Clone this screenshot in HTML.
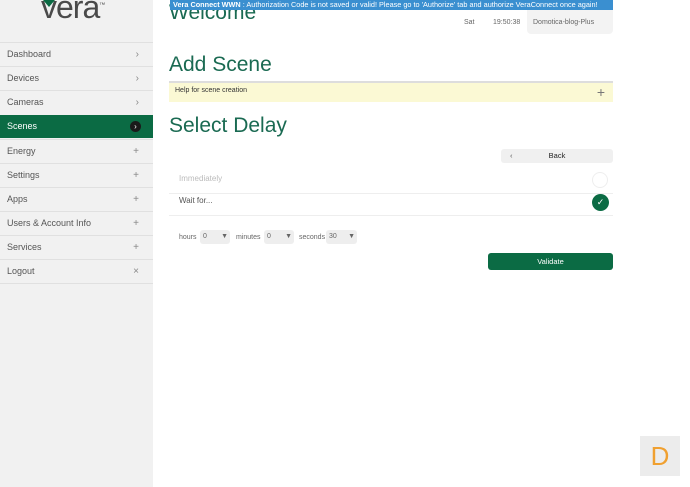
<!DOCTYPE html><html><head><style>
body{margin:0;width:690px;height:487px;position:relative;overflow:hidden;background:#fff;font-family:"Liberation Sans",sans-serif;}
.sb{position:absolute;left:0;top:0;width:153px;height:487px;background:#f1f1f1;}
.logo{position:absolute;left:41px;top:-11px;font-size:32px;color:#4a4a4a;letter-spacing:-1px}
.tri{position:absolute;left:43px;top:0;width:0;height:0;border-left:6px solid transparent;border-right:6px solid transparent;border-top:7px solid #0b6b44}
.it{position:absolute;left:0;width:153px;height:23px;border-top:1px solid #e0e0e0;font-size:9px;color:#555;line-height:23px;box-sizing:border-box;padding-left:7px}
.it span{position:absolute;right:14px;top:0;color:#888;font-size:10px}
.sel{background:#0b6b44;color:#fff;border:none}
.sel span{right:12px;top:6px;width:11px;height:11px;border-radius:50%;background:#1a1a1a;color:#fff;font-size:8px;line-height:11px;text-align:center}
h1{position:absolute;margin:0;font-weight:normal;color:#1a6a52;font-size:21px;left:169px}
.ban{position:absolute;left:170px;top:0;width:443px;height:10px;background:#3a8fd0;color:#fff;font-size:7.3px;line-height:10px;white-space:nowrap;overflow:hidden;padding-left:3px;box-sizing:border-box}
.small{position:absolute;font-size:7px;color:#666}
</style></head><body>
<div class="sb">
<div class="logo">vera<sup style="font-size:6px">™</sup></div>
<div class="tri"></div>
<div class="it" style="top:42px">Dashboard<span>›</span></div>
<div class="it" style="top:66px">Devices<span>›</span></div>
<div class="it" style="top:90px">Cameras<span>›</span></div>
<div class="it sel" style="top:115px">Scenes<span>›</span></div>
<div class="it" style="top:139px">Energy<span>+</span></div>
<div class="it" style="top:163px">Settings<span>+</span></div>
<div class="it" style="top:187px">Apps<span>+</span></div>
<div class="it" style="top:211px">Users &amp; Account Info<span>+</span></div>
<div class="it" style="top:235px">Services<span>+</span></div>
<div class="it" style="top:259px">Logout<span>×</span></div>
<div class="it" style="top:283px;height:1px"></div>
</div>
<h1 style="top:1px">Welcome</h1>
<div class="ban"><b>Vera Connect WWN</b> : Authorization Code is not saved or valid! Please go to 'Authorize' tab and authorize VeraConnect once again!</div>
<div style="position:absolute;left:527px;top:10px;width:86px;height:24px;background:#f3f3f3;border-radius:0 0 4px 4px"></div>
<div class="small" style="left:464px;top:19px">Sat</div>
<div class="small" style="left:493px;top:19px">19:50:38</div>
<div class="small" style="left:533px;top:19px">Domotica-blog-Plus</div>
<h1 style="top:53px">Add Scene</h1>
<div style="position:absolute;left:169px;top:81px;width:444px;height:21px;background:#fbf9d4;border-top:2px solid #ddd;box-sizing:border-box;font-size:7px;color:#333;padding:4px 6px">Help for scene creation<span style="position:absolute;right:8px;top:1px;font-size:14px;color:#777">+</span></div>
<h1 style="top:114px">Select Delay</h1>
<div style="position:absolute;left:501px;top:149px;width:112px;height:14px;background:#f0f0f0;border-radius:3px;font-size:7.5px;color:#222;line-height:14px;text-align:center">Back<span style="position:absolute;left:9px;color:#555">‹</span></div>
<div class="small" style="left:179px;top:174px;font-size:8px;color:#bbb">Immediately</div>
<div style="position:absolute;left:592px;top:172px;width:14px;height:14px;border:1px solid #eee;border-radius:50%"></div>
<div style="position:absolute;left:169px;top:193px;width:444px;height:1px;background:#eee"></div>
<div class="small" style="left:179px;top:196px;font-size:8px;color:#555">Wait for...</div>
<div style="position:absolute;left:592px;top:194px;width:17px;height:17px;background:#0b6b44;border-radius:50%;color:#fff;font-size:9px;line-height:17px;text-align:center">✓</div>
<div style="position:absolute;left:169px;top:215px;width:444px;height:1px;background:#eee"></div>
<div class="small" style="left:179px;top:234px">hours</div>
<div class="small" style="left:200px;top:230px;width:30px;height:14px;background:#eee;border-radius:3px;line-height:14px;padding-left:3px;box-sizing:border-box">0<span style="position:absolute;right:2px">▼</span></div>
<div class="small" style="left:236px;top:234px">minutes</div>
<div class="small" style="left:264px;top:230px;width:30px;height:14px;background:#eee;border-radius:3px;line-height:14px;padding-left:3px;box-sizing:border-box">0<span style="position:absolute;right:2px">▼</span></div>
<div class="small" style="left:299px;top:234px">seconds</div>
<div class="small" style="left:326px;top:230px;width:31px;height:14px;background:#eee;border-radius:3px;line-height:14px;padding-left:3px;box-sizing:border-box">30<span style="position:absolute;right:2px">▼</span></div>
<div style="position:absolute;left:488px;top:253px;width:125px;height:17px;background:#0b6b44;border-radius:3px;color:#fff;font-size:7.5px;line-height:17px;text-align:center">Validate</div>
<div style="position:absolute;left:640px;top:436px;width:40px;height:40px;background:#ececec;color:#f0a030;font-size:26px;line-height:40px;text-align:center">D</div>
</body></html>
